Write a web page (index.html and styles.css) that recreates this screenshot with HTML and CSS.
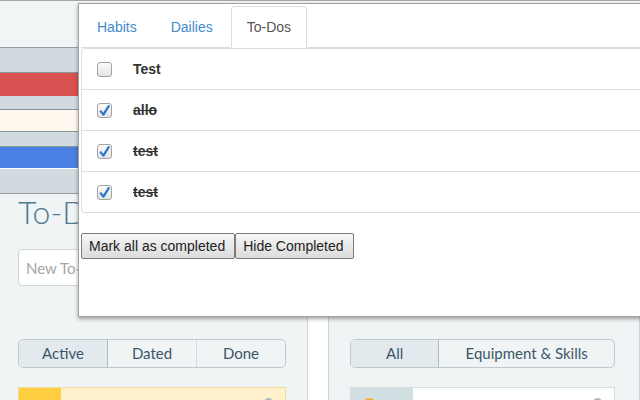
FILE: index.html
```html
<!DOCTYPE html>
<html>
<head>
<meta charset="utf-8">
<title>Habitica To-Dos</title>
<link rel="stylesheet" href="styles.css">
</head>
<body>
<div class="app">
  <header class="top">
    <div class="hdr"></div>
    <div class="meters">
      <div class="meter m-hp"></div>
      <div class="meter m-xp"></div>
      <div class="meter m-mp"></div>
    </div>
  </header>
  <main class="cols">
    <section class="col col-left">
      <h2 class="title">To-Dos</h2>
      <input class="newtask" type="text" placeholder="New To-Do">
      <div class="seg">
        <span class="seg-item on">Active</span>
        <span class="seg-item">Dated</span>
        <span class="seg-item">Done</span>
      </div>
      <div class="card card-todo">
        <span class="card-side"></span>
        <span class="card-body"></span>
        <span class="card-dot"></span>
      </div>
    </section>
    <div class="gutter"></div>
    <section class="col col-right">
      <h2 class="title">Rewards</h2>
      <input class="newtask" type="text" placeholder="New Reward">
      <div class="seg">
        <span class="seg-item on">All</span>
        <span class="seg-item wide">Equipment &amp; Skills</span>
      </div>
      <div class="card card-reward">
        <span class="card-side"><span class="coin"></span></span>
        <span class="card-body"></span>
        <span class="card-dot"></span>
      </div>
    </section>
  </main>

  <div class="popup">
    <ul class="tabs">
      <li class="tab">Habits</li>
      <li class="tab">Dailies</li>
      <li class="tab on">To-Dos</li>
    </ul>
    <ul class="list">
      <li class="item"><span class="cb"></span><span class="label">Test</span></li>
      <li class="item done"><span class="cb"><svg viewBox="0 0 15 15" width="15" height="15"><path d="M3.2 7.6 L6.4 11.6 L12.2 2.4" /></svg></span><span class="label">allo</span></li>
      <li class="item done"><span class="cb"><svg viewBox="0 0 15 15" width="15" height="15"><path d="M3.2 7.6 L6.4 11.6 L12.2 2.4" /></svg></span><span class="label">test</span></li>
      <li class="item done"><span class="cb"><svg viewBox="0 0 15 15" width="15" height="15"><path d="M3.2 7.6 L6.4 11.6 L12.2 2.4" /></svg></span><span class="label">test</span></li>
    </ul>
    <div class="btns">
      <button class="btn">Mark all as completed</button><button class="btn">Hide Completed</button>
    </div>
  </div>
</div>
</body>
</html>
```
FILE: styles.css
```css
* { box-sizing: border-box; }
html, body { margin: 0; padding: 0; overflow: hidden; }
body {
  width: 640px;
  height: 400px;
  background: #f0f4f5;
  font-family: Lato, "Open Sans", sans-serif;
}
.app {
  position: relative;
  width: 640px;
  height: 400px;
  overflow: hidden;
}

/* header + meters */
.hdr {
  height: 47px;
  border-top: 1px solid #a7a7a7;
  background: #f2f5f6;
}
.meters {
  background: #d1dbdf;
  border-top: 1px solid #959fa3;
  border-bottom: 1px solid #959fa3;
  padding: 24px 0;
}
.meter { border-top: 1px solid #8a9599; }
.m-hp { height: 24px; background: #d95252; margin-bottom: 13px; }
.m-xp { height: 23px; background: #fff9ef; border-bottom: 1px solid #8a9599; margin-bottom: 14px; }
.m-mp { height: 23px; background: #4a80e2; border-bottom: 1px solid #ffffff; }

/* columns */
.cols {
  display: flex;
  height: 206px;
  padding-top: 2px;
}
.col { background: #f0f4f5; }
.col-left {
  width: 308px;
  flex: none;
  padding: 0 21px 0 18px;
  border-right: 1px solid #c9d5d9;
}
.gutter { width: 20px; flex: none; background: #ffffff; }
.col-right {
  flex: 1;
  padding: 0 24px 0 21px;
  border-left: 1px solid #c9d5d9;
  border-right: 1px solid #c9d5d9;
}
.title {
  margin: 0;
  font-size: 32px;
  line-height: 32px;
  font-weight: 300;
  color: #4f7892;
  white-space: nowrap;
}
.newtask {
  display: block;
  width: 100%;
  height: 37px;
  margin-top: 21px;
  border: 1px solid #cfd9dd;
  border-radius: 4px;
  background: #ffffff;
  padding: 0 7px;
  font-family: Lato, sans-serif;
  font-size: 15px;
}
.newtask::placeholder { color: #a6a6a6; }

.seg {
  display: flex;
  height: 29px;
  margin-top: 53px;
  border: 1px solid #bccad0;
  border-radius: 5px;
  overflow: hidden;
}
.seg-item {
  flex: 1;
  text-align: center;
  line-height: 27px;
  font-size: 15px;
  color: #3b566a;
  border-left: 1px solid #d3dde1;
}
.seg-item:first-child { border-left: none; }
.seg-item.on { background: #e3eaed; }
.seg-item.on + .seg-item { border-left-color: #a9bcc4; }
.seg-item.wide { flex: 2; }

.card {
  display: flex;
  height: 40px;
  margin-top: 19px;
  border: 1px solid;
  position: relative;
}
.card-todo { border-color: #f1de9e; background: #fff1cc; }
.card-todo .card-side { width: 42px; background: #ffcd40; }
.card-reward { border-color: #d5dee1; background: #ffffff; }
.card-reward .card-side { width: 62px; background: #d2dfe3; position: relative; }
.card-body { flex: 1; }
.coin {
  position: absolute;
  left: 11px;
  top: 10px;
  width: 15px;
  height: 15px;
  border-radius: 50%;
  background: #f0b42a;
}
.card-dot {
  position: absolute;
  right: 12px;
  top: 10px;
  width: 9px;
  height: 9px;
  border-radius: 50%;
  border: 2px solid #b0b8bb;
}

/* popup */
.popup {
  position: absolute;
  left: 78px;
  top: 3px;
  width: 600px;
  height: 314px;
  padding: 2px;
  background: #ffffff;
  border: 1px solid #a2a2a2;
  box-shadow: 0 2px 4px rgba(0, 0, 0, 0.35);
  font-family: "Liberation Sans", Arial, sans-serif;
  font-size: 14px;
  color: #333333;
}
.tabs {
  display: flex;
  margin: 0;
  padding: 0;
  list-style: none;
  border-bottom: 1px solid #dddddd;
}
.tab {
  margin: 0 2px -1px 0;
  padding: 10px 15px;
  line-height: 20px;
  border: 1px solid transparent;
  border-radius: 4px 4px 0 0;
  color: #428bca;
}
.tab.on {
  color: #555555;
  background: #ffffff;
  border-color: #dddddd #dddddd transparent;
}
.list {
  margin: 0 0 20px;
  padding: 0;
  list-style: none;
}
.item {
  display: flex;
  align-items: center;
  padding: 10px 15px;
  line-height: 20px;
  border: 1px solid #dddddd;
  margin-bottom: -1px;
  font-weight: bold;
}
.item:first-child { border-radius: 4px 4px 0 0; }
.item:last-child { border-radius: 0 0 4px 4px; margin-bottom: 0; }
.item.done .label { text-decoration: line-through; }
.cb {
  flex: none;
  position: relative;
  width: 15px;
  height: 15px;
  margin-right: 21px;
  border: 1px solid #a3a3a3;
  border-radius: 3px;
  background: linear-gradient(#fbfbfb, #e4e4e4);
}
.cb svg {
  position: absolute;
  left: -1px;
  top: -1px;
  display: block;
}
.cb svg path {
  fill: none;
  stroke: #2f78cc;
  stroke-width: 2.3;
  stroke-linejoin: round;
}
.btns { display: flex; }
.btn {
  margin: 0;
  height: 26px;
  padding: 0 9px 0 7px;
  font-family: "Liberation Sans", Arial, sans-serif;
  font-size: 14px;
  color: #222222;
  border: 1px solid #7a7a7a;
  border-radius: 2px;
  background: linear-gradient(#f6f6f6, #dcdcdc);
}
```
